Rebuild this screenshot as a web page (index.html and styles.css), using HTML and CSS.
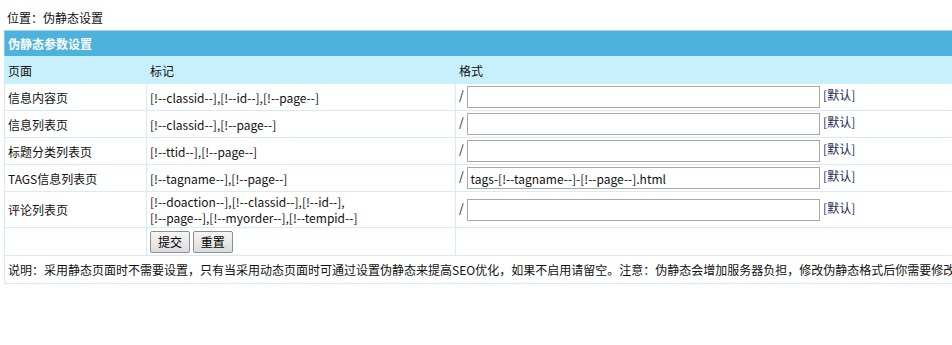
FILE: index.html
```html
<!DOCTYPE html>
<html lang="zh-CN">
<head>
  <meta charset="UTF-8">
  <title>伪静态设置</title>
  <link rel="stylesheet" href="styles.css">
</head>
<body>
<div class="position">位置：伪静态设置</div>
<table class="tableborder">
  <colgroup>
    <col class="c1">
    <col class="c2">
    <col class="c3">
  </colgroup>
  <tr class="header">
    <td colspan="3">伪静态参数设置</td>
  </tr>
  <tr class="title">
    <td>页面</td>
    <td>标记</td>
    <td>格式</td>
  </tr>
  <tr>
    <td>信息内容页</td>
    <td>[!--classid--],[!--id--],[!--page--]</td>
    <td>/ <input type="text" class="rew"> <span class="def">[默认]</span></td>
  </tr>
  <tr>
    <td>信息列表页</td>
    <td>[!--classid--],[!--page--]</td>
    <td>/ <input type="text" class="rew"> <span class="def">[默认]</span></td>
  </tr>
  <tr>
    <td>标题分类列表页</td>
    <td>[!--ttid--],[!--page--]</td>
    <td>/ <input type="text" class="rew"> <span class="def">[默认]</span></td>
  </tr>
  <tr>
    <td>TAGS信息列表页</td>
    <td>[!--tagname--],[!--page--]</td>
    <td>/ <input type="text" class="rew" value="tags-[!--tagname--]-[!--page--].html"> <span class="def">[默认]</span></td>
  </tr>
  <tr class="tall">
    <td>评论列表页</td>
    <td>[!--doaction--],[!--classid--],[!--id--],<br>[!--page--],[!--myorder--],[!--tempid--]</td>
    <td>/ <input type="text" class="rew"> <span class="def">[默认]</span></td>
  </tr>
  <tr class="btns">
    <td>&nbsp;</td>
    <td><button class="btn">提交</button> <button class="btn">重置</button></td>
    <td>&nbsp;</td>
  </tr>
  <tr class="note">
    <td colspan="3">说明：采用静态页面时不需要设置，只有当采用动态页面时可通过设置伪静态来提高SEO优化，如果不启用请留空。注意：伪静态会增加服务器负担，修改伪静态格式后你需要修改服务器的 Rewrite 规则设置。</td>
  </tr>
</table>
</body>
</html>
```

FILE: styles.css
```css
* {
  margin: 0;
  padding: 0;
}
html, body {
  overflow: hidden;
}
body {
  background: #fff;
  font-family: "Noto Sans CJK SC", "DejaVu Sans", sans-serif;
  font-size: 12px;
  color: #111;
}
.position {
  height: 30px;
  line-height: 36px;
  padding-left: 7px;
}
.tableborder {
  margin-left: 4px;
  width: 1120px;
  border-collapse: collapse;
  border: 1px solid #86c6e0;
  table-layout: fixed;
}
.tableborder col.c1 {
  width: 142px;
}
.tableborder col.c2 {
  width: 309px;
}
.tableborder td {
  height: 26px;
  padding: 0 3px;
  border: 1px solid #d4ecf5;
  vertical-align: middle;
  white-space: nowrap;
}
.tableborder .header td {
  background: #4db3dc;
  color: #fff;
  font-weight: bold;
  height: 25px;
  border: 0;
  border-top: 1px solid #9fd8ee;
}
.tableborder .title td {
  background: #c7effc;
  border-color: #c7effc;
}
.tableborder .tall td {
  height: 35px;
  line-height: 16px;
}
.tableborder .btns td {
  height: 27px;
}
.tableborder .note td {
  height: 27px;
}
.rew {
  width: 347px;
  height: 20px;
  border: 1px solid #a9a9a9;
  padding: 0 2px;
  font-family: "Noto Sans CJK SC", "DejaVu Sans", sans-serif;
  font-size: 12px;
  color: #111;
  vertical-align: middle;
  margin-left: 1px;
}
.def {
  color: #1a2a5a;
}
.btn {
  height: 22px;
  padding: 0 7px;
  font-family: "Noto Sans CJK SC", sans-serif;
  font-size: 12px;
  color: #000;
  border: 1px solid #8f8f8f;
  border-radius: 2px;
  background: linear-gradient(#f6f6f6, #dcdcdc);
  vertical-align: middle;
}
```
